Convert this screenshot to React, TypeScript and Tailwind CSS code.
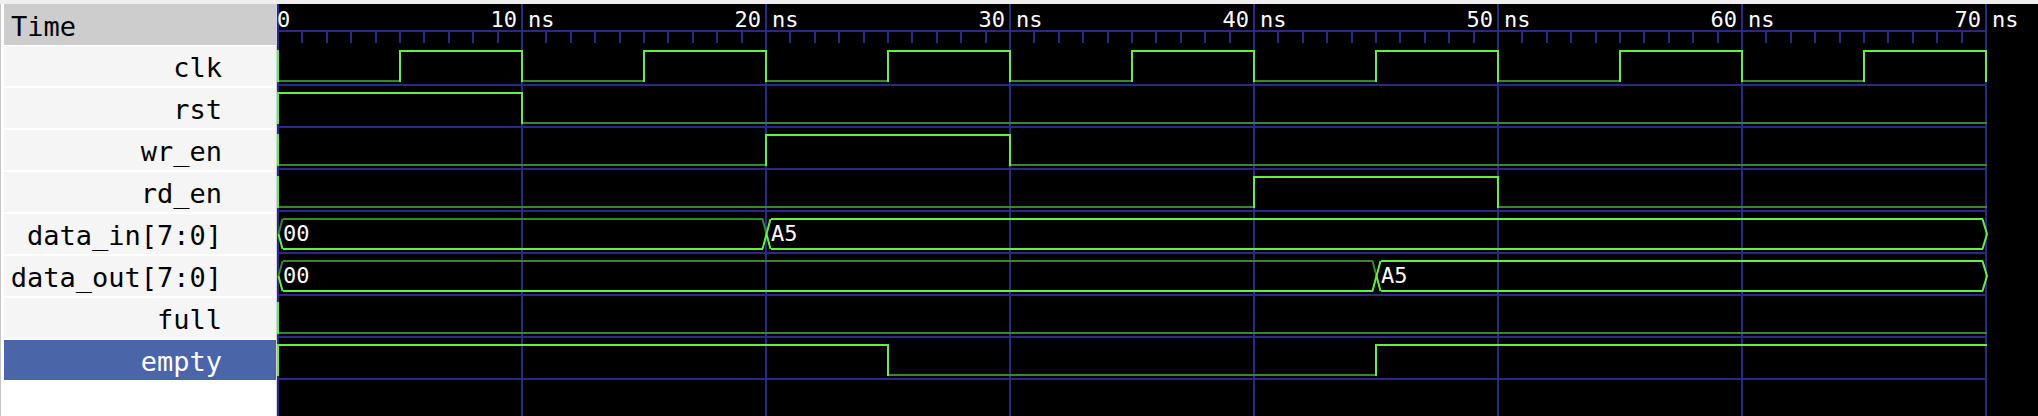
const BRIGHT = "#62f23e";
const DARK = "#358a28";
const GRID = "#2a2a86";

const PX_PER_NS = 24.4;
const END = 70;
const X = (t: number) => Math.floor(1.5 + PX_PER_NS * t);
const rowTop = (k: number) => 42 + 42 * k;

type Seg = [number, number, number];
type BusSeg = [number, number, string];

type Signal =
	| { name: string; kind: "bit"; segs: Seg[]; endEdge?: boolean }
	| { name: string; kind: "bus"; segs: BusSeg[] };

const clockSegs: Seg[] = Array.from({ length: 14 }, (_, i) => [
	i * 5,
	i * 5 + 5,
	i % 2,
]);

const signals: Signal[] = [
	{ name: "clk", kind: "bit", segs: clockSegs, endEdge: true },
	{ name: "rst", kind: "bit", segs: [[0, 10, 1], [10, 70, 0]] },
	{ name: "wr_en", kind: "bit", segs: [[0, 20, 0], [20, 30, 1], [30, 70, 0]] },
	{ name: "rd_en", kind: "bit", segs: [[0, 40, 0], [40, 50, 1], [50, 70, 0]] },
	{ name: "data_in[7:0]", kind: "bus", segs: [[0, 20, "00"], [20, 70, "A5"]] },
	{ name: "data_out[7:0]", kind: "bus", segs: [[0, 45, "00"], [45, 70, "A5"]] },
	{ name: "full", kind: "bit", segs: [[0, 70, 0]] },
	{ name: "empty", kind: "bit", segs: [[0, 25, 1], [25, 45, 0], [45, 70, 1]] },
];

const SELECTED = "empty";

function BitWave({ k, segs, endEdge }: { k: number; segs: Seg[]; endEdge?: boolean }) {
	const top = rowTop(k);
	const hi = top + 5;
	const lo = top + 35;
	const edges = [0, ...segs.slice(1).map((s) => s[0])];
	if (endEdge) edges.push(END);
	return (
		<g shapeRendering="crispEdges" strokeWidth={2}>
			{segs.map(([a, b, v]) => (
				<line
					key={`h${a}`}
					x1={X(a)}
					x2={X(b) + 1}
					y1={v ? hi : lo}
					y2={v ? hi : lo}
					stroke={v ? BRIGHT : DARK}
				/>
			))}
			{edges.map((t) => (
				<line key={`v${t}`} x1={X(t)} x2={X(t)} y1={hi - 1} y2={lo + 1} stroke={BRIGHT} />
			))}
		</g>
	);
}

function BusWave({ k, segs }: { k: number; segs: BusSeg[] }) {
	const top = rowTop(k) + 5;
	const bot = rowTop(k) + 35;
	const mid = rowTop(k) + 20;
	return (
		<g strokeWidth={2} fill="none">
			{segs.map(([a, b, v], i) => {
				const x0 = X(a) + 4.5;
				const x1 = X(b) - 3.5;
				const topColor = v === "00" ? DARK : BRIGHT;
				return (
					<g key={a}>
						<line x1={x0} x2={x1} y1={top} y2={top} stroke={topColor} shapeRendering="crispEdges" />
						<line x1={x0} x2={x1} y1={bot} y2={bot} stroke={BRIGHT} shapeRendering="crispEdges" />
						{i === 0 && (
							<>
								<line x1={x0} y1={top} x2={X(a) + 0.5} y2={mid} stroke={topColor} />
								<line x1={X(a) + 0.5} y1={mid} x2={x0} y2={bot} stroke={BRIGHT} />
							</>
						)}
						{b === END ? (
							<polyline points={`${x1},${top} ${X(b) + 1},${mid} ${x1},${bot}`} stroke={BRIGHT} />
						) : (
							<>
								<line x1={x1} y1={top} x2={X(b) + 0.5} y2={mid} stroke={topColor} />
								<line x1={X(b) + 0.5} y1={mid} x2={X(b) + 4.5} y2={bot} stroke={BRIGHT} />
								<line x1={x1} y1={bot} x2={X(b) + 4.5} y2={top} stroke={BRIGHT} />
							</>
						)}
						<text x={X(a) + 5} y={rowTop(k) + 27} className="fill-white text-[22px]">
							{v}
						</text>
					</g>
				);
			})}
		</g>
	);
}

function Waves() {
	const majors = [0, 10, 20, 30, 40, 50, 60, 70];
	const minors = Array.from({ length: 70 }, (_, i) => i).filter((t) => t % 10 !== 0);
	return (
		<svg width={1761} height={412} className="block shrink-0 bg-black">
			<g shapeRendering="crispEdges" stroke={GRID} strokeWidth={2}>
				<line x1={0} x2={X(END) + 1} y1={27} y2={27} />
				{minors.map((t) => (
					<line key={t} x1={X(t)} x2={X(t)} y1={27} y2={39} />
				))}
				{majors.map((t) => (
					<line key={t} x1={X(t)} x2={X(t)} y1={0} y2={412} />
				))}
				{signals.map((_, k) => (
					<line key={k} x1={0} x2={X(END) + 1} y1={rowTop(k) + 39} y2={rowTop(k) + 39} />
				))}
			</g>
			<g className="fill-white text-[22px]">
				<text x={0} y={23}>
					0
				</text>
				{majors.slice(1).map((t) => (
					<g key={t}>
						<text x={X(t) - 5} y={23} textAnchor="end">
							{t}
						</text>
						<text x={X(t) + 6} y={23}>
							ns
						</text>
					</g>
				))}
			</g>
			{signals.map((s, k) =>
				s.kind === "bit" ? (
					<BitWave key={s.name} k={k} segs={s.segs} endEdge={s.endEdge} />
				) : (
					<BusWave key={s.name} k={k} segs={s.segs} />
				),
			)}
		</svg>
	);
}

export default function App() {
	return (
		<div className="flex h-[416px] w-[2038px] flex-col overflow-hidden bg-[#efefef] font-['DejaVu_Sans_Mono',monospace]">
			<div className="h-[4px] shrink-0" />
			<div className="flex min-h-0 flex-1">
				<aside className="flex w-[277px] shrink-0 flex-col border-x border-l-[#c6c3c0] border-r-[#d3d3d3] bg-white pl-[3px]">
					<div className="mb-[1px] h-[41px] bg-[#cdcdcd] pl-[7px] pt-[5px] text-[27px] leading-[36px] text-black">
						Time
					</div>
					{signals.map((s) => (
						<div
							key={s.name}
							className={
								s.name === SELECTED
									? "mb-[2px] h-[40px] bg-[#4a65a8] pr-[54px] pt-[4px] text-right text-[27px] leading-[36px] whitespace-pre text-white"
									: "mb-[2px] h-[40px] bg-[#f5f5f5] pr-[54px] pt-[4px] text-right text-[27px] leading-[36px] whitespace-pre text-black"
							}
						>
							{s.name}
						</div>
					))}
				</aside>
				<Waves />
			</div>
		</div>
	);
}
